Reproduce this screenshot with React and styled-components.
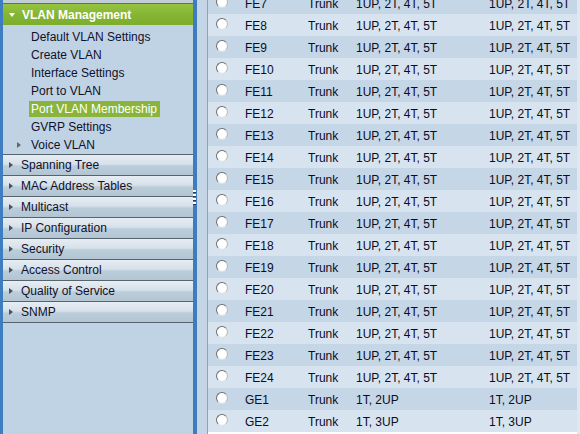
import React from 'react'
import styled, { createGlobalStyle } from 'styled-components'

const GlobalStyle = createGlobalStyle`
	html, body {
		margin: 0;
		padding: 0;
		height: 434px;
		overflow: hidden;
		font-family: 'Liberation Sans', Arial, sans-serif;
		font-size: 12px;
	}
`

const Page = styled.div`
	display: flex;
	height: 434px;
	width: 580px;
	overflow: hidden;
`

const Sidebar = styled.div`
	width: 190px;
	flex: none;
	border-left: 3px solid #3e7dc0;
	background: #c0d3e5;
	color: #10102a;
	display: flex;
	flex-direction: column;
`

const PrevStub = styled.div`
	height: 3px;
	background: #c4ced7;
	border-bottom: 1px solid #5e6c74;
`

const GroupHead = styled.div`
	height: 21px;
	display: flex;
	align-items: center;
	padding-left: 6px;
	gap: 7px;
	background: linear-gradient(#97c343, #86b534 50%, #7dad2c);
	color: #ffffff;
	font-weight: bold;
	font-size: 12px;
`

const DownArrow = styled.span`
	width: 0;
	height: 0;
	border-left: 3px solid transparent;
	border-right: 3px solid transparent;
	border-top: 4px solid #ffffff;
	margin-top: 1px;
`

const SubMenu = styled.ul`
	list-style: none;
	margin: 0;
	padding: 3px 0 0 0;
`

const SubItem = styled.li`
	height: 18px;
	display: flex;
	align-items: center;
	padding-left: ${props => (props.tree ? '14px' : '26px')};
	gap: 8px;
`

const ItemLabel = styled.span`
	line-height: 16px;
	padding: 0 2px;
	background: ${props => (props.active ? '#8ab43b' : 'transparent')};
	color: ${props => (props.active ? '#ffffff' : 'inherit')};
	width: ${props => (props.active ? '127px' : 'auto')};
`

const RightArrow = styled.span`
	width: 0;
	height: 0;
	border-top: 3px solid transparent;
	border-bottom: 3px solid transparent;
	border-left: 4px solid ${props => props.color || '#555'};
`

const Sections = styled.ul`
	list-style: none;
	margin: 0;
	padding: 0;
	border-bottom: 1px solid #56656d;
`

const Section = styled.li`
	height: 20px;
	display: flex;
	align-items: center;
	padding-left: 6px;
	gap: 8px;
	border-top: 1px solid #56656d;
	background: linear-gradient(#e6edf3, #d7e1ea 45%, #bccdda 55%, #b3c5d3);
`

const Splitter = styled.div`
	width: 4px;
	flex: none;
	background: #3d7cbe;
	position: relative;

	&::after {
		content: '';
		position: absolute;
		left: 0;
		top: 190px;
		width: 3px;
		height: 15px;
		background: repeating-linear-gradient(#ffffff 0 2px, #1e3c60 2px 3px, transparent 3px 4px);
	}
`

const Gutter = styled.div`
	width: 10px;
	flex: none;
	background: #c4d5e6;
	border-right: 1px solid #8ea3b6;
`

const Content = styled.div`
	width: 369px;
	flex: none;
	overflow: hidden;
`

const Table = styled.div`
	margin-top: -8px;
`

const Row = styled.div`
	height: 22px;
	display: grid;
	grid-template-columns: 29px 63px 48px 133px 1fr;
	align-items: center;
	padding-left: 8px;
	box-sizing: border-box;
	background: ${props => (props.odd ? '#c5d6e7' : '#d7e4f0')};
	color: #0c0c1c;
	white-space: nowrap;
`

const Radio = styled.span`
	width: 10px;
	height: 10px;
	border-radius: 50%;
	border: 1px solid;
	border-color: #6f6f6f #bcbcbc #e4e4e4 #6f6f6f;
	background: radial-gradient(circle at 45% 45%, #ffffff 55%, #e6e6e6);
	margin-top: -2px;
`

const Cell = styled.span`
	line-height: 20px;
	padding-top: 2px;
`

const EdgeStrip = styled.div`
	flex: 1;
	background: #dfe7ef;
`

const subItems = [
	'Default VLAN Settings',
	'Create VLAN',
	'Interface Settings',
	'Port to VLAN',
	'Port VLAN Membership',
	'GVRP Settings',
]

const sections = [
	'Spanning Tree',
	'MAC Address Tables',
	'Multicast',
	'IP Configuration',
	'Security',
	'Access Control',
	'Quality of Service',
	'SNMP',
]

const full = '1UP, 2T, 4T, 5T'
const ports = []
for (let i = 7; i <= 24; i++) ports.push({ name: 'FE' + i, a: full, b: full })
ports.push({ name: 'GE1', a: '1T, 2UP', b: '1T, 2UP' })
ports.push({ name: 'GE2', a: '1T, 3UP', b: '1T, 3UP' })

export default function App() {
	return (
		<Page>
			<GlobalStyle />
			<Sidebar>
				<PrevStub />
				<GroupHead>
					<DownArrow />
					VLAN Management
				</GroupHead>
				<SubMenu>
					{subItems.map(item => (
						<SubItem key={item}>
							<ItemLabel active={item === 'Port VLAN Membership'}>{item}</ItemLabel>
						</SubItem>
					))}
					<SubItem tree>
						<RightArrow color="#666" />
						<ItemLabel>Voice VLAN</ItemLabel>
					</SubItem>
				</SubMenu>
				<Sections>
					{sections.map(s => (
						<Section key={s}>
							<RightArrow color="#4a5258" />
							{s}
						</Section>
					))}
				</Sections>
			</Sidebar>
			<Splitter />
			<Gutter />
			<Content>
				<Table>
					{ports.map((p, i) => (
						<Row key={p.name} odd={i % 2 === 0}>
							<Radio />
							<Cell>{p.name}</Cell>
							<Cell>Trunk</Cell>
							<Cell>{p.a}</Cell>
							<Cell>{p.b}</Cell>
						</Row>
					))}
				</Table>
			</Content>
			<EdgeStrip />
		</Page>
	)
}
